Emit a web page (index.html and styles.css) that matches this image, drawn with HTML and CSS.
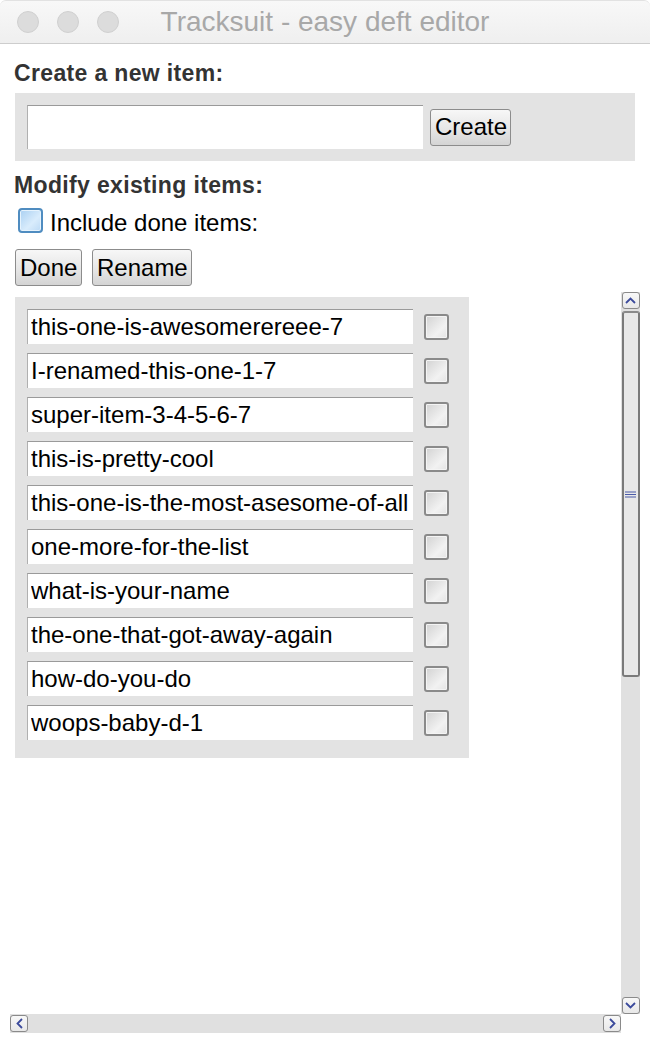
FILE: index.html
```html
<!DOCTYPE html>
<html>
<head>
<meta charset="utf-8">
<title>Tracksuit - easy deft editor</title>
<link rel="stylesheet" href="styles.css">
</head>
<body>
<div class="window">
  <header class="titlebar">
    <div class="lights">
      <span class="light"></span><span class="light"></span><span class="light"></span>
    </div>
    <div class="title">Tracksuit - easy deft editor</div>
    <div class="spacer"></div>
  </header>

  <main class="main">
    <h2 class="heading first">Create a new item:</h2>
    <div class="create-box">
      <input class="field create-field" type="text" value="">
      <button class="btn">Create</button>
    </div>

    <h2 class="heading second">Modify existing items:</h2>
    <label class="include-row">
      <input class="check-blue" type="checkbox">
      <span class="include-text">Include done items:</span>
    </label>
    <div class="actions">
      <button class="btn">Done</button>
      <button class="btn">Rename</button>
    </div>

    <div class="scroller">
      <div class="scroll-content">
        <div class="list-box">
          <div class="item"><input class="field" type="text" value="this-one-is-awesomerereee-7"><input class="check" type="checkbox"></div>
          <div class="item"><input class="field" type="text" value="I-renamed-this-one-1-7"><input class="check" type="checkbox"></div>
          <div class="item"><input class="field" type="text" value="super-item-3-4-5-6-7"><input class="check" type="checkbox"></div>
          <div class="item"><input class="field" type="text" value="this-is-pretty-cool"><input class="check" type="checkbox"></div>
          <div class="item"><input class="field" type="text" value="this-one-is-the-most-asesome-of-all"><input class="check" type="checkbox"></div>
          <div class="item"><input class="field" type="text" value="one-more-for-the-list"><input class="check" type="checkbox"></div>
          <div class="item"><input class="field" type="text" value="what-is-your-name"><input class="check" type="checkbox"></div>
          <div class="item"><input class="field" type="text" value="the-one-that-got-away-again"><input class="check" type="checkbox"></div>
          <div class="item"><input class="field" type="text" value="how-do-you-do"><input class="check" type="checkbox"></div>
          <div class="item"><input class="field" type="text" value="woops-baby-d-1"><input class="check" type="checkbox"></div>
        </div>
      </div>

      <div class="vscroll">
        <div class="sb-btn">
          <svg width="11" height="7" viewBox="0 0 11 7"><path d="M1 6 L5.5 1.5 L10 6" fill="none" stroke="#3b4a9c" stroke-width="1.8"/></svg>
        </div>
        <div class="vthumb">
          <svg width="11" height="7" viewBox="0 0 11 7"><path d="M0 1H11M0 3.5H11M0 6H11" stroke="#4a5aa8" stroke-width="1"/></svg>
        </div>
        <div class="vtrack"></div>
        <div class="sb-btn">
          <svg width="11" height="7" viewBox="0 0 11 7"><path d="M1 1 L5.5 5.5 L10 1" fill="none" stroke="#3b4a9c" stroke-width="1.8"/></svg>
        </div>
      </div>

      <div class="hscroll">
        <div class="sb-btn">
          <svg width="7" height="11" viewBox="0 0 7 11"><path d="M6 1 L1.5 5.5 L6 10" fill="none" stroke="#3b4a9c" stroke-width="1.8"/></svg>
        </div>
        <div class="htrack"></div>
        <div class="sb-btn">
          <svg width="7" height="11" viewBox="0 0 7 11"><path d="M1 1 L5.5 5.5 L1 10" fill="none" stroke="#3b4a9c" stroke-width="1.8"/></svg>
        </div>
      </div>
      <div class="corner"></div>
    </div>
  </main>
</div>
</body>
</html>
```

FILE: styles.css
```css
* { box-sizing: border-box; }

html, body {
  margin: 0;
  padding: 0;
  background: #ffffff;
}

body {
  width: 650px;
  height: 1044px;
  overflow: hidden;
  font-family: "Liberation Sans", Arial, sans-serif;
  color: #000;
}

.window {
  width: 650px;
  height: 1044px;
  display: flex;
  flex-direction: column;
  background: #fff;
}

.titlebar {
  height: 44px;
  flex: none;
  display: grid;
  grid-template-columns: 1fr auto 1fr;
  align-items: center;
  background: linear-gradient(#f8f8f8, #efefef);
  border-bottom: 1px solid #cdcdcd;
  border-radius: 6px 6px 0 0;
  border-top: 1px solid #e2e2e2;
}

.lights {
  display: flex;
  gap: 18px;
  padding-left: 17px;
}

.light {
  width: 22px;
  height: 22px;
  border-radius: 50%;
  background: #dcdcdc;
  border: 1px solid #d0d0d0;
}

.title {
  font-size: 28px;
  line-height: 32px;
  color: #a8a8a8;
  padding-bottom: 1px;
}

.main {
  flex: 1;
  display: flex;
  flex-direction: column;
  min-height: 0;
}

.heading {
  margin: 0;
  padding-left: 14px;
  font-size: 23px;
  letter-spacing: 0.35px;
  font-weight: bold;
  line-height: 30px;
  color: #333;
}

.heading.first { margin-top: 14px; height: 30px; }
.heading.second { margin-top: 9px; height: 30px; }

.create-box {
  margin: 5px 15px 0 15px;
  height: 68px;
  background: #e3e3e3;
  display: flex;
  align-items: center;
  padding-left: 12px;
  gap: 7px;
}

.field {
  font-family: "Liberation Sans", Arial, sans-serif;
  font-size: 24px;
  color: #000;
  background: #fff;
  border: none;
  border-top: 1px solid #9a9a9a;
  border-left: 1px solid #b0b0b0;
  padding: 0 0 0 3px;
  margin: 0;
  outline: none;
}

.create-field {
  width: 396px;
  height: 44px;
}

.btn {
  font-family: "Liberation Sans", Arial, sans-serif;
  font-size: 24px;
  color: #000;
  height: 37px;
  padding: 0 4px;
  margin: 0;
  border: 1px solid #8c8c8c;
  border-radius: 3px;
  background: linear-gradient(#f7f7f7, #e6e6e6 55%, #d4d4d4);
}

.create-box .btn { width: 81px; }

.include-row {
  margin-top: 8px;
  height: 25px;
  display: flex;
  align-items: center;
  padding-left: 18px;
  gap: 7px;
  font-size: 24px;
}

.include-text {
  position: relative;
  top: 2px;
}

.check-blue {
  appearance: none;
  -webkit-appearance: none;
  margin: 0;
  width: 25px;
  height: 25px;
  border: 2px solid #4f8cc0;
  border-radius: 4px;
  background: linear-gradient(135deg, #a9d0f2, #d9ecfc 60%, #bcdaf5);
  box-shadow: inset 0 0 0 1px #e6f3fd;
}

.actions {
  margin-top: 16px;
  padding-left: 15px;
  display: flex;
  gap: 10px;
}

.actions .btn:first-child { width: 67px; }
.actions .btn:last-child { width: 100px; }

.scroller {
  margin: 6px 10px 11px 10px;
  flex: 1;
  min-height: 0;
  display: grid;
  grid-template-columns: 611px 19px;
  grid-template-rows: 1fr 19px;
}

.scroll-content {
  padding: 5px 0 0 5px;
  overflow: hidden;
}

.list-box {
  width: 454px;
  height: 461px;
  background: #e3e3e3;
  padding: 12px 0 0 12px;
  display: flex;
  flex-direction: column;
  gap: 9px;
}

.item {
  display: flex;
  align-items: center;
  gap: 10px;
  height: 35px;
}

.item .field {
  width: 386px;
  height: 35px;
}

.check {
  appearance: none;
  -webkit-appearance: none;
  margin: 0 0 0 1px;
  width: 25px;
  height: 26px;
  border: 2px solid #8a8a8a;
  border-radius: 3px;
  background: linear-gradient(135deg, #d2d2d2, #f2f2f2 65%, #e4e4e4);
  box-shadow: inset 0 0 0 1px #f4f4f4;
}

.vscroll {
  display: flex;
  flex-direction: column;
  background: #e0e0e0;
  align-items: center;
}

.sb-btn {
  width: 18px;
  height: 17px;
  flex: none;
  display: flex;
  align-items: center;
  justify-content: center;
  border: 1px solid #8a8a8a;
  border-radius: 3px;
  background: linear-gradient(#f8f8f8, #e8e8e8);
}

.vthumb {
  margin-top: 2px;
  width: 18px;
  height: 366px;
  flex: none;
  display: flex;
  align-items: center;
  justify-content: center;
  border: 2px solid #7a7a7a;
  border-top-color: #8a8a8a;
  border-radius: 3px;
  background: #e8e8e8;
}

.vtrack { flex: 1; }

.hscroll {
  display: flex;
  background: #e0e0e0;
  align-items: center;
}

.hscroll .sb-btn {
  width: 18px;
  height: 17px;
}

.htrack { flex: 1; }

.corner { background: #fff; }
```
